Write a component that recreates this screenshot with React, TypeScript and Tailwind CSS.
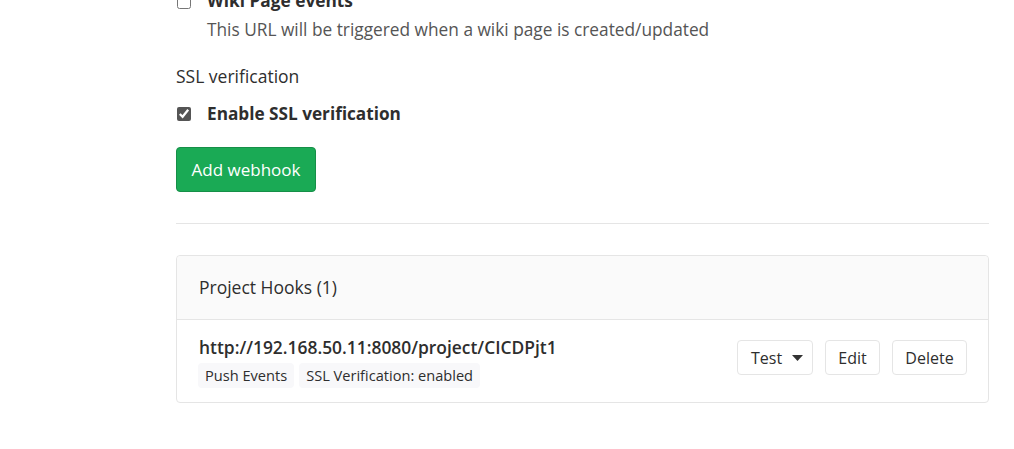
import React from 'react';

export default function App() {
  return (
    <div className="w-[1014px] h-[449px] overflow-hidden bg-white text-[#2e2e2e] font-['Open_Sans',sans-serif]">
      <div className="ml-[176px] mr-[25px] -mt-[11px]">
        {/* Wiki page events */}
        <div className="flex items-start">
          <input type="checkbox" className="w-[14px] h-[14px] mt-[6px] ml-[1px] accent-[#333]" readOnly />
          <div className="ml-[16px]">
            <div className="text-[17.3px] font-bold leading-[24px]">Wiki Page events</div>
            <div className="text-[17.3px] leading-[24px] text-[#555] mt-[5px]">
              This URL will be triggered when a wiki page is created/updated
            </div>
          </div>
        </div>

        {/* SSL verification */}
        <div className="mt-[22px] text-[17.5px] leading-[24px]">SSL verification</div>
        <div className="flex items-center mt-[14px]">
          <input type="checkbox" checked readOnly className="w-[14px] h-[14px] ml-[1px] accent-[#555]" />
          <span className="ml-[16px] text-[17.2px] font-bold leading-[24px]">Enable SSL verification</span>
        </div>

        <button className="mt-[21px] h-[45px] w-[140px] rounded-[4px] bg-[#1aaa55] text-white text-[17px] border border-[#168f48]">
          Add webhook
        </button>

        <div className="mt-[31px] border-t border-[#e5e5e5]" />

        {/* Project hooks */}
        <div className="mt-[31px] border border-[#e5e5e5] rounded-[4px]">
          <div className="h-[64px] bg-[#fafafa] border-b border-[#e5e5e5] flex items-center px-[22px] text-[17.5px] rounded-t-[4px]">
            Project Hooks (1)
          </div>
          <div className="flex items-start justify-between pl-[22px] pr-[21px] h-[82px] pt-[16px]">
            <div>
              <div className="text-[17.4px] font-semibold leading-[22px]">http://192.168.50.11:8080/project/CICDPjt1</div>
              <div className="flex gap-[5px] mt-[5px] -ml-[1px]">
                <span className="bg-[#f8f8fa] rounded-[4px] px-[7px] text-[14.6px] leading-[25px] text-[#2e2e2e]">Push Events</span>
                <span className="bg-[#f8f8fa] rounded-[4px] px-[7px] text-[14.6px] leading-[25px] text-[#2e2e2e]">SSL Verification: enabled</span>
              </div>
            </div>
            <div className="flex gap-[12px] mt-[4px]">
              <button className="h-[35px] w-[76px] pl-[13px] border border-[#e5e5e5] rounded-[4px] text-[16px] flex items-center gap-[10px]">
                Test
                <svg width="11" height="6" viewBox="0 0 11 6"><path d="M0 0h11L5.5 6z" fill="#333" /></svg>
              </button>
              <button className="h-[35px] w-[55px] border border-[#e5e5e5] rounded-[4px] text-[16px]">Edit</button>
              <button className="h-[35px] w-[75px] border border-[#e5e5e5] rounded-[4px] text-[16px]">Delete</button>
            </div>
          </div>
        </div>
      </div>
    </div>
  );
}
